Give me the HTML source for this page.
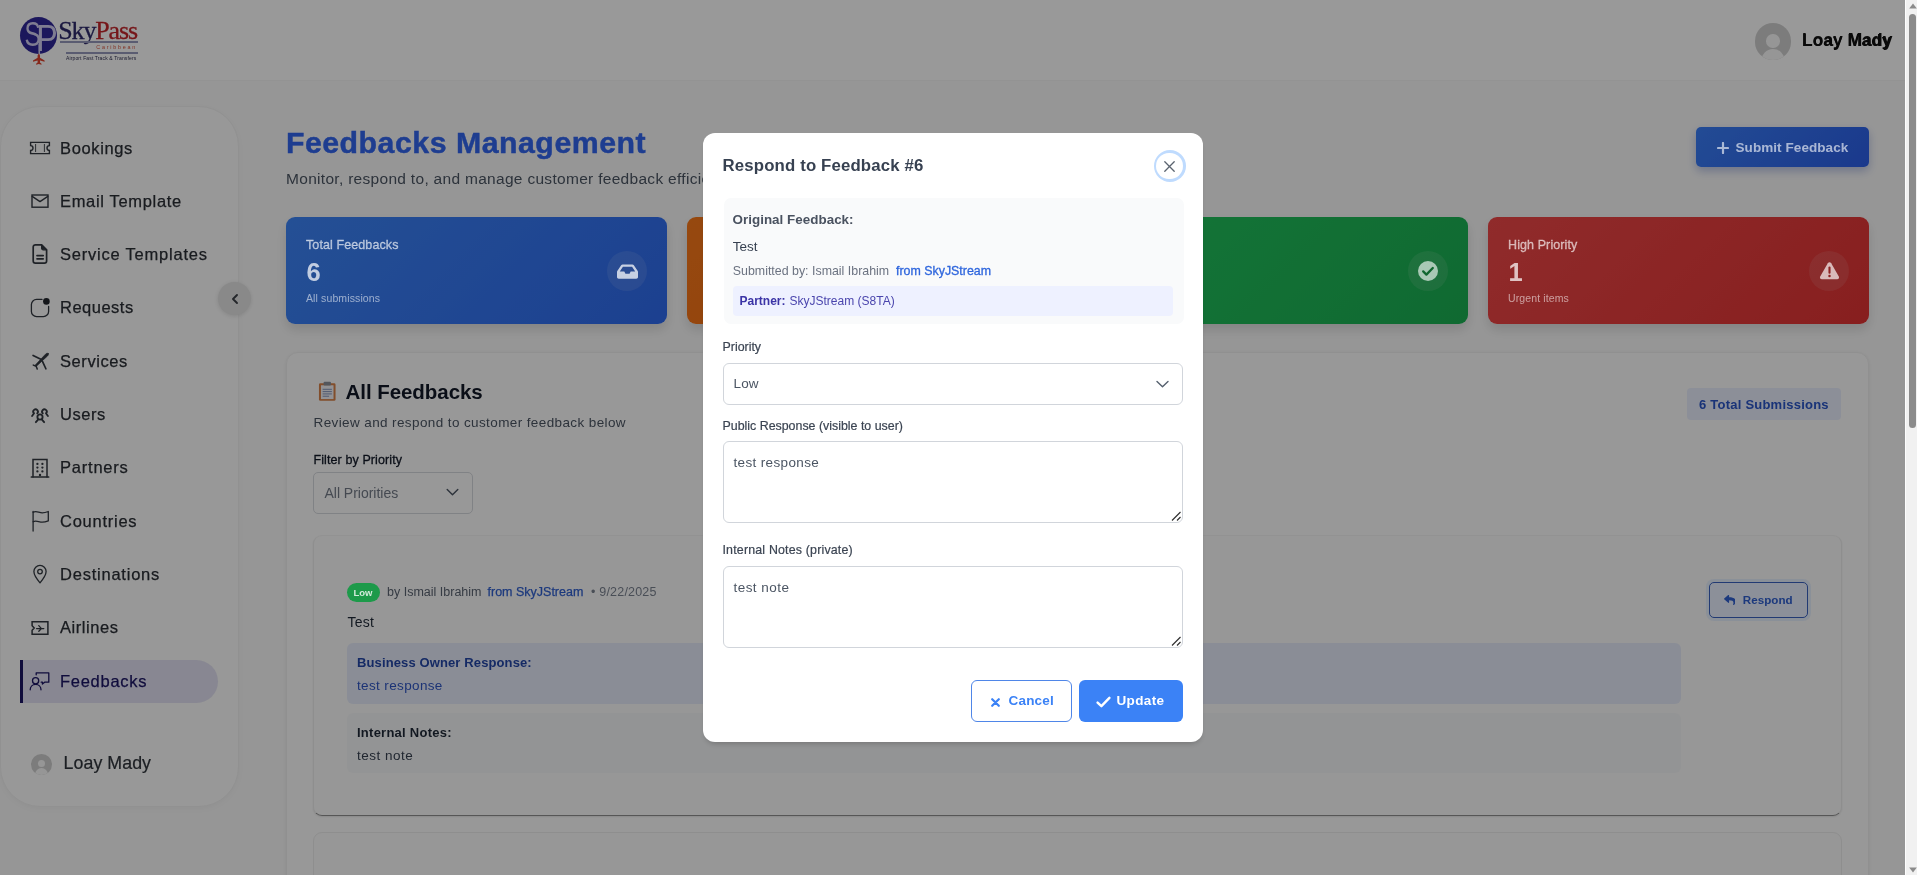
<!DOCTYPE html>
<html lang="en">
<head>
<meta charset="utf-8">
<title>Feedbacks Management</title>
<style>
*{box-sizing:border-box;margin:0;padding:0}
html,body{width:1917px;height:875px;overflow:hidden;background:#fff}
html{filter:grayscale(0.001)}
body{font-family:"Liberation Sans",Arial,sans-serif;color:#1f2937;position:relative}
.abs{position:absolute}
.top{z-index:6}
#sb{z-index:10}
.t{position:absolute;white-space:nowrap;line-height:1}
#page{position:absolute;left:0;top:0;width:1905px;height:875px;background:#fbfbfb;overflow:hidden}
#overlay{z-index:5;position:absolute;left:0;top:0;width:1905px;height:875px;background:rgba(0,0,0,0.4)}
/* header */
#hdr{position:absolute;left:0;top:0;width:1905px;height:81px;background:#fff;border-bottom:1px solid #f5f5f5}
/* sidebar */
#side{position:absolute;left:0;top:106px;width:239px;height:701px;border-radius:40px;background:#fdfdfd;border:1px solid #f2f2f2;box-shadow:0 2px 10px rgba(0,0,0,0.04)}
.nav{position:absolute;left:60px;font-size:16.5px;color:#2b2f36;-webkit-text-stroke:0.25px #2b2f36;white-space:nowrap;line-height:1}
.ico{position:absolute;left:29px;width:22px;height:22px}
.ico svg{width:22px;height:22px;display:block}
#active{position:absolute;left:20px;top:660px;width:198px;height:43px;background:#e3e2f3;border-left:3px solid #1b1464;border-radius:0 22px 22px 0}
#collapse{position:absolute;left:218px;top:282px;width:33px;height:33px;border-radius:50%;background:#e4e4e4;box-shadow:0 1px 4px rgba(0,0,0,.12)}
/* main */
.card{position:absolute;border-radius:9px;top:217px;height:107px;width:381px;box-shadow:0 6px 12px rgba(0,0,0,.12)}
.card .l1{z-index:6;position:absolute;left:20px;top:22.3px;font-size:12.5px;color:rgba(255,255,255,.6);-webkit-text-stroke:0.3px rgba(255,255,255,.6);letter-spacing:0.1px;line-height:1;white-space:nowrap}
.card .l2{z-index:6;position:absolute;left:20.5px;top:43px;font-size:25.5px;font-weight:bold;color:rgba(255,255,255,.72);line-height:1}
.card .l3{z-index:6;position:absolute;left:20px;top:75.5px;font-size:10.5px;letter-spacing:0.12px;color:rgba(255,255,255,.55);line-height:1;white-space:nowrap}
.card .ic svg{z-index:6}
.card .ic{position:absolute;right:20px;top:34px;width:40px;height:40px;border-radius:50%;background:rgba(255,255,255,.1)}
.lbl{font-size:12.400px;color:#3b4452;-webkit-text-stroke:0.2px #3b4452}
.fld{border:1px solid #d1d5db;border-radius:6px;background:#fff}
#modal{z-index:10;position:absolute;left:703px;top:133px;width:500px;height:609px;background:#fff;border-radius:12px;box-shadow:0 4px 5px -2px rgba(0,0,0,.18)}
</style>
</head>
<body>
<div id="page">

  <div id="hdr">
    <!-- logo -->
    <div class="abs" style="left:20.3px;top:16.6px;width:37px;height:37px;border-radius:50%;background:#30279a"></div>
    <svg class="abs" style="left:18px;top:14px" width="44" height="54" viewBox="18 14 44 54">
      <text x="24.400" y="46.200" font-family="Liberation Sans, Arial, sans-serif" font-size="34.500" fill="#d4d1f2" textLength="16.400" lengthAdjust="spacingAndGlyphs">S</text>
      <text x="36.300" y="51.300" font-family="Liberation Sans, Arial, sans-serif" font-size="36" fill="#d4d1f2" textLength="21.500" lengthAdjust="spacingAndGlyphs">P</text>
      <line x1="39.250" y1="44" x2="39.250" y2="55" stroke="#d4d1f2" stroke-width="1.6"/>
      <path transform="translate(18.3,13)" d="M20.5 40.5 l1.2 2 v2.2 l4.6 2.8 v1.3 l-4.6-1.2 v2 l1.5 1.2 v.9 l-2.7-.7 l-2.7.7 v-.9 l1.5-1.2 v-2 l-4.6 1.2 v-1.3 l4.6-2.8 v-2.2z" fill="#e0452f"/>
    </svg>
    <div class="t" style="left:58.300px;top:17.600px;font-family:'Liberation Serif','Times New Roman',serif;font-size:26px;letter-spacing:-1.150px;color:#2e2a6c;-webkit-text-stroke:0.3px #2e2a6c">Sky<span style="color:#c4262c;-webkit-text-stroke:0.3px #c4262c">Pass</span></div>
    <div class="abs" style="left:60px;top:41.2px;width:77.5px;height:1.4px;background:#9799bd"></div>
    <div class="t" style="left:96.3px;top:44.6px;font-size:5.4px;letter-spacing:1.75px;color:#d8553f">Caribbean</div>
    <div class="abs" style="left:66px;top:52.2px;width:71.5px;height:1.4px;background:#9799bd"></div>
    <div class="t" style="left:66px;top:55.6px;font-size:5px;letter-spacing:0.13px;color:#2f2f50">Airport Fast Track &amp; Transfers</div>
    <!-- user -->
    <div class="abs" style="left:1754.700px;top:23.200px;width:36.500px;height:36.500px;border-radius:50%;background:#cfcfcf;overflow:hidden">
      <div class="abs" style="left:11.500px;top:11.200px;width:13.500px;height:13.500px;border-radius:50%;background:#fafafa"></div>
      <div class="abs" style="left:6px;top:25.800px;width:24.500px;height:26px;border-radius:50%;background:#fafafa"></div>
    </div>
    <div class="t" style="left:1802.300px;top:33.200px;font-size:16.800px;font-weight:bold;color:#0a0a0a;letter-spacing:0.25px">Loay Mady</div>
  </div>
    <div class="t" style="left:1802px;top:32px;font-size:17.5px;font-weight:bold;color:#111">Loay Mady</div>
  </div>
  <div id="side"></div>
  <div id="active"></div>
  <div class="ico" style="top:136.8px"><svg viewBox="0 0 22 22" fill="none" stroke="#343a42" stroke-width="1.4" stroke-linecap="round" stroke-linejoin="round" ><path d="M1.6 5.4h18.8v3.2a2.4 2.4 0 0 0 0 4.8v3.2H1.6v-3.2a2.4 2.4 0 0 0 0-4.8z" stroke-linejoin="miter"/><path d="M6.6 7.4v7.2M15.4 7.4v7.2" stroke-width="0.9"/></svg></div>
  <div class="nav" style="top:139.5px;letter-spacing:0.63px;">Bookings</div>
  <div class="ico" style="top:190.1px"><svg viewBox="0 0 22 22" fill="none" stroke="#343a42" stroke-width="1.4" stroke-linecap="round" stroke-linejoin="round" ><rect x="3" y="5" width="16" height="12.2" stroke-linejoin="miter"/><path d="M3.2 6.4l7.8 5.2 7.8-5.2"/></svg></div>
  <div class="nav" style="top:192.8px;letter-spacing:0.67px;">Email Template</div>
  <div class="ico" style="top:243.4px"><svg viewBox="0 0 22 22" fill="none" stroke="#343a42" stroke-width="1.4" stroke-linecap="round" stroke-linejoin="round" ><path d="M6.4 1.8h6.2l5 5v11.2a2.2 2.2 0 0 1-2.2 2.2H6.4a2.2 2.2 0 0 1-2.2-2.2V4a2.2 2.2 0 0 1 2.2-2.2z" stroke-width="1.7"/><path d="M12.6 1.8v3.4a1.6 1.6 0 0 0 1.6 1.6h3.4z" fill="#343a42" stroke-width="1.2"/><path d="M8 12.6h6.2M8 15.8h6.2" stroke-width="1.7"/></svg></div>
  <div class="nav" style="top:246.1px;letter-spacing:0.78px;">Service Templates</div>
  <div class="ico" style="top:296.7px"><svg viewBox="0 0 22 22" fill="none" stroke="#343a42" stroke-width="1.4" stroke-linecap="round" stroke-linejoin="round" ><path d="M13 2.4H7.6a5.2 5.2 0 0 0-5.2 5.2v6.8a5.2 5.2 0 0 0 5.2 5.2h6.8a5.2 5.2 0 0 0 5.2-5.2V9.4" stroke-width="1.3"/><circle cx="17.4" cy="4.4" r="3.3" fill="#23272e" stroke="none"/></svg></div>
  <div class="nav" style="top:299.4px;letter-spacing:0.50px;">Requests</div>
  <div class="ico" style="top:350.0px"><svg viewBox="0 0 22 22" fill="none" stroke="#343a42" stroke-width="1.4" stroke-linecap="round" stroke-linejoin="round" ><g transform="translate(11.3 11) scale(.9) translate(-11 -11)"><path d="M19.8 2.6c-.9-.5-2.2-.1-3 .8L5.2 15.8l1.2 1.2L19 5.4c.9-.8 1.300-2 .8-2.800z" fill="#343a42" stroke-width="0.8"/><path d="M3 4.800l8.600 4.200" stroke-width="1.9"/><path d="M13.400 11.4l3.800 8.200" stroke-width="1.9"/><path d="M3.200 15.600l3.200 1.200 1.200 3" stroke-width="1.700"/></g></svg></div>
  <div class="nav" style="top:352.7px;letter-spacing:0.58px;">Services</div>
  <div class="ico" style="top:403.3px"><svg viewBox="0 0 22 22" fill="none" stroke="#343a42" stroke-width="1.4" stroke-linecap="round" stroke-linejoin="round" ><g transform="translate(11 11.600) scale(.9) translate(-11 -11)" stroke-width="2.050"><circle cx="11" cy="13.600" r="2.900"/><path d="M6.400 19.400l2.200-2.600M15.600 19.400l-2.200-2.600"/><path d="M7.900 9.600a2.600 2.600 0 1 0-3.900-.3M4.400 9.500l-2.200 3"/><path d="M14.100 9.600a2.600 2.600 0 1 1 3.900-.3M17.600 9.500l2.200 3"/></g></svg></div>
  <div class="nav" style="top:406.0px;letter-spacing:0.54px;">Users</div>
  <div class="ico" style="top:456.6px"><svg viewBox="0 0 22 22" fill="none" stroke="#343a42" stroke-width="1.4" stroke-linecap="round" stroke-linejoin="round" ><path d="M4 20V2.400h14V20" stroke-linejoin="miter" stroke-width="1.500"/><path d="M2.400 20h17.200" stroke-width="1.700"/><g fill="#343a42" stroke="none"><circle cx="8.400" cy="6.900" r="1.150"/><circle cx="13.400" cy="6.900" r="1.150"/><circle cx="8.400" cy="10.600" r="1.150"/><circle cx="13.400" cy="10.600" r="1.150"/><circle cx="8.400" cy="14.400" r="1.150"/><circle cx="13.400" cy="14.400" r="1.150"/><circle cx="11" cy="18" r="1.200"/></g></svg></div>
  <div class="nav" style="top:459.3px;letter-spacing:0.78px;">Partners</div>
  <div class="ico" style="top:509.9px"><svg viewBox="0 0 22 22" fill="none" stroke="#343a42" stroke-width="1.4" stroke-linecap="round" stroke-linejoin="round" ><path d="M4.100 1.400V21" stroke-width="1.300"/><path d="M4.100 2.300c3-1.600 5 .0 7.600.4s5-.2 7.600-1.200v9.400c-2.600 1-5 1.600-7.600 1.200s-4.600-2-7.600-.4" stroke-width="1.300"/></svg></div>
  <div class="nav" style="top:512.6px;letter-spacing:0.75px;">Countries</div>
  <div class="ico" style="top:563.2px"><svg viewBox="0 0 22 22" fill="none" stroke="#343a42" stroke-width="1.4" stroke-linecap="round" stroke-linejoin="round" ><path d="M11 19.800S4.900 12.600 4.900 8.500a6.100 6.100 0 0 1 12.200 0c0 4.100-6.100 11.300-6.100 11.300z" stroke-width="1.300"/><circle cx="11" cy="8.600" r="2.300" stroke-width="1.300"/></svg></div>
  <div class="nav" style="top:565.9px;letter-spacing:0.77px;">Destinations</div>
  <div class="ico" style="top:616.5px"><svg viewBox="0 0 22 22" fill="none" stroke="#343a42" stroke-width="1.4" stroke-linecap="round" stroke-linejoin="round" ><path d="M3.100 4.800h15.800v12.400H3.100v-4l2.100-2.200-2.100-2.200z" stroke-linejoin="miter" stroke-width="1.500"/><path d="M7.600 11.600h7.200M9.800 8.600l2.600 3-2.600 2.600" stroke-width="1.300"/></svg></div>
  <div class="nav" style="top:619.2px;letter-spacing:0.56px;">Airlines</div>
  <div class="ico" style="top:669.8px"><svg viewBox="0 0 22 22" fill="none" stroke="#1b1464" stroke-width="1.4" stroke-linecap="round" stroke-linejoin="round" style="color:#1b1464"><circle cx="6.600" cy="10.800" r="3.100" stroke-width="1.300"/><path d="M1.200 19.800c0-3.300 2.400-5.400 5.400-5.400s5.400 2.100 5.400 5.400" stroke-width="1.300"/><path d="M7.200 4.800V2.800h12.600v9.400h-4.200l-2.200 1.800v-1.800h-1.200" stroke-width="1.300"/></svg></div>
  <div class="nav" style="top:672.5px;letter-spacing:0.72px;color:#1b1464;-webkit-text-stroke-color:#1b1464">Feedbacks</div>
  <div id="collapse"><svg class="abs" style="left:12px;top:10.500px" width="10" height="12" viewBox="0 0 10 12" fill="none" stroke="#3c4047" stroke-width="1.900" stroke-linecap="round" stroke-linejoin="round"><path d="M7 2L3 6l4 4"/></svg></div>
  <div class="abs" style="left:31px;top:753.500px;width:21px;height:21px;border-radius:50%;background:#cfcfcf;overflow:hidden">
    <div class="abs" style="left:6.800px;top:6.300px;width:7.400px;height:7.400px;border-radius:50%;background:#fafafa"></div>
    <div class="abs" style="left:3.600px;top:14.800px;width:13.800px;height:14px;border-radius:50%;background:#fafafa"></div>
  </div>
  <div class="t" style="left:63.600px;top:754.800px;font-size:17.800px;color:#30353c;-webkit-text-stroke:0.2px #30353c;letter-spacing:0.05px">Loay Mady</div>

  <!-- main -->
  <div class="t" id="title" style="left:285.9px;top:128px;font-size:30.3px;font-weight:bold;color:#3266f0;letter-spacing:0.5px;-webkit-text-stroke:0.45px #3266f0">Feedbacks Management</div>
  <div class="t" id="subtitle" style="left:286px;top:170.5px;font-size:15.5px;color:#4b5563;letter-spacing:0.3px">Monitor, respond to, and manage customer feedback efficiently</div>
  <div id="submit" class="abs" style="left:1696px;top:127px;width:173px;height:40px;border-radius:5px;background:linear-gradient(135deg,#3a7ef8,#2c5fea);box-shadow:0 4px 10px rgba(30,64,175,.3)">
    <svg class="abs top" style="left:20.5px;top:15px" width="12" height="12" viewBox="0 0 12 12" stroke="rgba(255,255,255,.62)" stroke-width="2.2" stroke-linecap="round"><path d="M6 1v10M1 6h10"/></svg>
    <div class="t top" style="left:39.5px;top:13.5px;font-size:13.5px;font-weight:bold;color:rgba(255,255,255,.62);letter-spacing:0.07px">Submit Feedback</div>
  </div>

  <div class="card" style="left:286px;background:linear-gradient(135deg,#3d85f8,#2f6bf0)">
    <div class="l1">Total Feedbacks</div><div class="l2">6</div><div class="l3">All submissions</div>
    <div class="ic"><svg class="abs" style="left:9.500px;top:12.500px" width="21" height="15" viewBox="0 0 576 400" fill="#fff" fill-opacity=".74"><path d="M567.938 187.908L462.250 29.380A48.003 48.003 0 0 0 422.311 8H153.689a48 48 0 0 0-39.938 21.380L8.062 187.908A48 48 0 0 0 0 214.530V352c0 26.510 21.490 48 48 48h480c26.510 0 48-21.490 48-48V214.530a48 48 0 0 0-8.062-26.622zM162.252 72h251.496l85.333 128H376l-32 64H232l-32-64H76.918l85.334-128z"/></svg></div>
  </div>
  <div class="card" style="left:687px;background:linear-gradient(135deg,#fb7a1a,#f0660f)">
    <div class="l1">Pending</div><div class="l2">0</div><div class="l3">Awaiting response</div>
    <div class="ic"></div>
  </div>
  <div class="card" style="left:1087px;background:linear-gradient(135deg,#22c55e,#1bb053)">
    <div class="l1">Responded</div><div class="l2">6</div><div class="l3">Completed</div>
    <div class="ic"><svg class="abs" style="left:10px;top:10px" width="20" height="20" viewBox="0 0 20 20"><circle cx="10" cy="10" r="10" fill="#fff" fill-opacity=".62"/><path d="M5.200 10.400l3.200 3.200 6.400-6.600" fill="none" stroke="#11662f" stroke-width="2.300" stroke-linecap="round" stroke-linejoin="round"/></svg></div>
  </div>
  <div class="card" style="left:1488px;background:linear-gradient(135deg,#f04848,#e23434)">
    <div class="l1">High Priority</div><div class="l2">1</div><div class="l3">Urgent items</div>
    <div class="ic"><svg class="abs" style="left:9.500px;top:10px" width="21" height="19" viewBox="0 0 21 19"><path d="M10.500 1.200c.7 0 1.300.4 1.700 1l7.600 13.200c.7 1.300-.2 2.800-1.700 2.800H2.900c-1.500 0-2.400-1.500-1.700-2.800L8.800 2.200c.4-.6 1-1 1.700-1z" fill="#fff" fill-opacity=".68"/><path d="M10.500 6.500v5.200" stroke="#8c2222" stroke-width="2.100" stroke-linecap="round"/><circle cx="10.500" cy="14.900" r="1.250" fill="#8c2222"/></svg></div>
  </div>

  <!-- list panel -->
  <div id="panel" class="abs" style="left:286px;top:352px;width:1583px;height:600px;border-radius:12px;background:#fefefe;border:1px solid #f1f1f1;box-shadow:0 1px 4px rgba(0,0,0,.07)"></div>
  <svg class="abs" style="left:317.500px;top:380.500px" width="18.500" height="20.300" viewBox="0 0 20 22"><rect x="1" y="2.500" width="18" height="19" rx="1.500" fill="#d9834a"/><rect x="3.200" y="4.600" width="13.600" height="15" fill="#f3f4f8"/><rect x="6" y="0.800" width="8" height="4" rx="1" fill="#8a8f99"/><path d="M5 9h10M5 11.500h10M5 14h10M5 16.500h7" stroke="#7d8db8" stroke-width="1"/></svg>
  <div class="t" style="left:345.500px;top:381.800px;font-size:20.500px;font-weight:bold;color:#111827;letter-spacing:-0.05px">All Feedbacks</div>
  <div class="t" style="left:313.500px;top:415.500px;font-size:13.500px;color:#4b5563;letter-spacing:0.39px">Review and respond to customer feedback below</div>
  <div class="abs" style="left:1687px;top:388.400px;width:154px;height:31.800px;border-radius:4px;background:#e9effd"></div>
  <div class="t" style="left:1699px;top:397.600px;font-size:13px;font-weight:bold;color:#2a55c8;letter-spacing:0.23px">6 Total Submissions</div>

  <div class="t" style="left:313.500px;top:453.500px;font-size:12.500px;color:#111827;-webkit-text-stroke:0.3px #111827;letter-spacing:0.1px">Filter by Priority</div>
  <div class="abs" style="left:313px;top:472px;width:160px;height:42px;border-radius:5px;border:1px solid #d6d9de;background:#fdfdfd"></div>
  <div class="t" style="left:324.500px;top:485.500px;font-size:14px;color:#737b88;letter-spacing:-0.02px">All Priorities</div>
  <svg class="abs" style="left:446px;top:488px" width="13" height="9" viewBox="0 0 13 9" fill="none" stroke="#4b5563" stroke-width="1.400" stroke-linecap="round" stroke-linejoin="round"><path d="M1.200 1.500l5.300 5.300 5.300-5.300"/></svg>

  <!-- feedback item -->
  <div class="abs" style="left:313px;top:535px;width:1529px;height:281px;border-radius:9px;background:#fcfcfc;border-left:1px solid #ededed;border-right:1px solid #ededed;border-top:1px solid #f3f3f3;border-bottom:1px solid #8f8f8f;box-shadow:0 1px 2px rgba(0,0,0,.1)"></div>
  <div class="abs top" style="left:347px;top:582.500px;width:33px;height:19px;border-radius:10px;background:#1d9a4a"></div>
  <div class="t" style="z-index:7;left:353.500px;top:587.500px;font-size:9.500px;font-weight:bold;color:rgba(255,255,255,.8)">Low</div>
  <div class="t" style="left:387px;top:585.500px;font-size:12.500px;color:#5b6472">by Ismail Ibrahim</div>
  <div class="t" style="left:487.500px;top:585.500px;font-size:12.500px;color:#2f5fd0;-webkit-text-stroke:0.25px #2f5fd0">from SkyJStream</div>
  <div class="t" style="left:591px;top:585.500px;font-size:12.500px;color:#7a8290;letter-spacing:0.2px">• 9/22/2025</div>
  <div class="t" style="left:347.500px;top:614.500px;font-size:14px;color:#1f2937;letter-spacing:0.2px">Test</div>
  <div class="abs" style="left:347px;top:643px;width:1334px;height:61px;border-radius:6px;background:#e6ecfb"></div>
  <div class="t" style="left:357px;top:655.500px;font-size:13px;font-weight:bold;color:#2447a8;letter-spacing:0.12px">Business Owner Response:</div>
  <div class="t" style="left:357px;top:678.500px;font-size:13.500px;color:#2f55c4;letter-spacing:0.36px">test response</div>
  <div class="abs" style="left:347px;top:713px;width:1334px;height:60px;border-radius:6px;background:#f6f7f9"></div>
  <div class="t" style="left:357px;top:725.500px;font-size:13px;font-weight:bold;color:#1f2937;letter-spacing:0.25px">Internal Notes:</div>
  <div class="t" style="left:357px;top:748.500px;font-size:13.500px;color:#374151;letter-spacing:0.5px">test note</div>
  <div class="abs" style="left:1709px;top:582px;width:99px;height:36px;border-radius:5px;border:1px solid #3a62c0;background:#e9f0ff;box-shadow:0 0 0 3px rgba(191,219,254,.35)"></div>
  <svg class="abs" style="left:1723.800px;top:594.200px" width="11.700" height="10.800" viewBox="0 0 512 460" fill="#2f5fd0"><path d="M8.309 189.836L184.313 37.851C199.719 24.546 224 35.347 224 56.015v80.053c160.629 1.839 288 34.032 288 186.258 0 61.441-39.581 122.309-83.333 154.132-13.653 9.931-33.111-2.533-28.077-18.631 45.344-145.012-21.507-183.510-176.590-185.742V360c0 20.700-24.300 31.453-39.687 18.164l-176.004-152c-11.071-9.562-11.086-26.753 0-36.328z"/></svg>
  <div class="t" style="left:1742.800px;top:594px;font-size:11.600px;font-weight:bold;color:#2f5fd0;letter-spacing:0.05px">Respond</div>
  <!-- next item -->
  <div class="abs" style="left:313px;top:831.500px;width:1529px;height:100px;border-radius:9px;background:#fcfcfc;border:1px solid #ededed"></div>
</div>
<div id="overlay"></div>
<div id="modal">
  <div class="t" style="left:19.500px;top:24.500px;font-size:16.800px;font-weight:bold;color:#374151;letter-spacing:0.15px">Respond to Feedback #6</div>
  <div class="abs" style="left:450.500px;top:17px;width:32px;height:32px;border-radius:50%;background:#bfdbfe"></div>
  <div class="abs" style="left:453.300px;top:19.800px;width:26.400px;height:26.400px;border-radius:50%;background:#fff"></div>
  <svg class="abs" style="left:461px;top:27.500px" width="11" height="11" viewBox="0 0 11 11" stroke="#5b6470" stroke-width="1.300" stroke-linecap="round"><path d="M0.800 0.800l9.400 9.400M10.200 0.800l-9.400 9.400"/></svg>

  <div class="abs" style="left:20.500px;top:64.500px;width:460px;height:126.500px;border-radius:7px;background:#f9fafb"></div>
  <div class="t" style="left:29.500px;top:80px;font-size:13.400px;font-weight:bold;color:#4a5260;letter-spacing:0.03px">Original Feedback:</div>
  <div class="t" style="left:29.800px;top:107px;font-size:13.500px;color:#374151">Test</div>
  <div class="t" style="left:29.800px;top:132px;font-size:12.400px;color:#6b7280">Submitted by: Ismail Ibrahim</div>
  <div class="t" style="left:193px;top:132px;font-size:12.400px;color:#2f66dd;-webkit-text-stroke:0.3px #2f66dd">from SkyJStream</div>
  <div class="abs" style="left:29.500px;top:153px;width:440.500px;height:30px;border-radius:4px;background:#eef1ff"></div>
  <div class="t" style="left:36.500px;top:162px;font-size:12px;font-weight:bold;color:#3b34a6">Partner:</div>
  <div class="t" style="left:86.500px;top:162px;font-size:12px;color:#4a45ad">SkyJStream (S8TA)</div>

  <div class="t lbl" style="left:19.500px;top:207.500px">Priority</div>
  <div class="abs fld" style="left:20px;top:230px;width:460px;height:42px"></div>
  <div class="t" style="left:30.500px;top:243.500px;font-size:13.500px;color:#4b5563;letter-spacing:0.15px">Low</div>
  <svg class="abs" style="left:452.500px;top:246.500px" width="13" height="9" viewBox="0 0 13 9" fill="none" stroke="#55606e" stroke-width="1.400" stroke-linecap="round" stroke-linejoin="round"><path d="M1 1.500l5.500 5.300 5.500-5.300"/></svg>

  <div class="t lbl" style="left:19.500px;top:286.500px">Public Response (visible to user)</div>
  <div class="abs fld" style="left:20px;top:308px;width:460px;height:82px"></div>
  <div class="t" style="left:30.500px;top:322.500px;font-size:13.500px;color:#4b5563;letter-spacing:0.350px">test response</div>
  <svg class="abs" style="left:468px;top:378px" width="10" height="10" viewBox="0 0 10 10" stroke="#333" stroke-width="1.200"><path d="M1 9.500L9.500 1M6 9.500L9.500 6"/></svg>

  <div class="t lbl" style="left:19.500px;top:410.500px;letter-spacing:0.18px">Internal Notes (private)</div>
  <div class="abs fld" style="left:20px;top:433px;width:460px;height:82px"></div>
  <div class="t" style="left:30.500px;top:447.500px;font-size:13.500px;color:#4b5563;letter-spacing:0.450px">test note</div>
  <svg class="abs" style="left:468px;top:503px" width="10" height="10" viewBox="0 0 10 10" stroke="#333" stroke-width="1.200"><path d="M1 9.500L9.500 1M6 9.500L9.500 6"/></svg>

  <div class="abs" style="left:268px;top:547px;width:101px;height:42px;border-radius:6px;border:1px solid #4f86e8;background:#fff"></div>
  <svg class="abs" style="left:288px;top:564.500px" width="9" height="9" viewBox="0 0 9 9" stroke="#3b82f6" stroke-width="2.200" stroke-linecap="round"><path d="M1.200 1.200l6.600 6.600M7.800 1.200l-6.600 6.600"/></svg>
  <div class="t" style="left:305.500px;top:560.800px;font-size:13.500px;font-weight:bold;color:#3b82f6;letter-spacing:0.2px">Cancel</div>
  <div class="abs" style="left:376px;top:547px;width:104px;height:42px;border-radius:6px;background:#3b82f6"></div>
  <svg class="abs" style="left:393px;top:563px" width="15" height="12" viewBox="0 0 15 12" fill="none" stroke="#fff" stroke-width="2.400" stroke-linecap="round" stroke-linejoin="round"><path d="M1.600 6.600l3.800 3.600 8-8.400"/></svg>
  <div class="t" style="left:413.500px;top:560.800px;font-size:13.500px;font-weight:bold;color:#fff;letter-spacing:0.350px">Update</div>
</div>
<div id="sb" class="abs" style="left:1905px;top:0;width:12px;height:875px;background:#f1f1f1;border-left:1px solid #fdfdfd">
  <svg class="abs" style="left:2.500px;top:3px" width="8" height="6" viewBox="0 0 8 6"><path d="M4 0.500L7.800 5.500H0.200z" fill="#8b8b8b"/></svg>
  <div class="abs" style="left:3px;top:13.500px;width:6.500px;height:414px;border-radius:3.500px;background:#8b8b8b"></div>
  <svg class="abs" style="left:2.500px;top:866.800px" width="8" height="6" viewBox="0 0 8 6"><path d="M4 5.500L7.800 0.500H0.200z" fill="#8b8b8b"/></svg>
</div>
</body>
</html>
